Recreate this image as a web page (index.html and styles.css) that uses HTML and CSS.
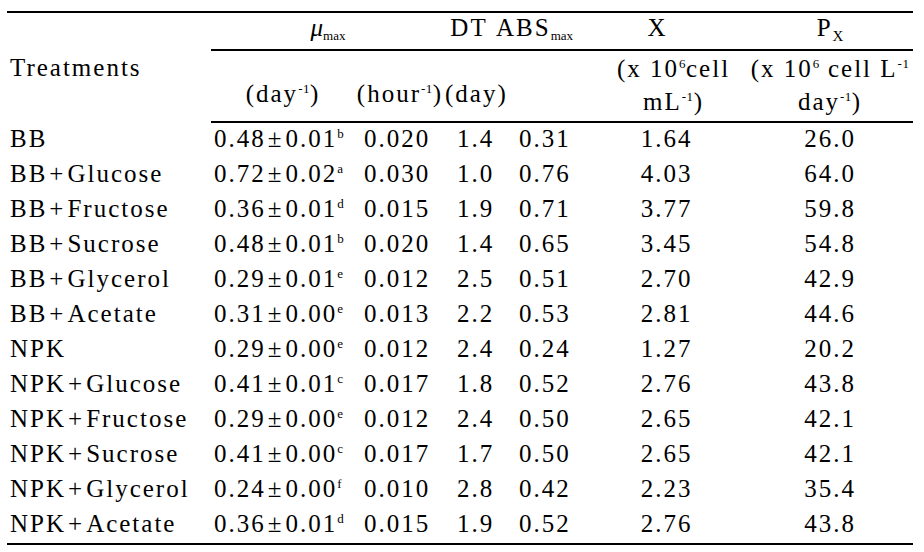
FILE: index.html
```html
<!DOCTYPE html>
<html lang="en">
<head>
<meta charset="utf-8">
<title>Growth parameters</title>
<link rel="stylesheet" href="styles.css">
</head>
<body>
<table class="tbl">
  <colgroup>
    <col class="c1"><col class="c2"><col class="c3"><col class="c4"><col class="c5"><col class="c6"><col class="c7">
  </colgroup>
  <thead>
    <tr class="h1">
      <th class="treat" rowspan="2">Treatments</th>
      <th class="mu" colspan="2"><i>μ</i><sub>max</sub></th>
      <th class="dt">DT</th>
      <th class="abs">ABS<sub>max</sub></th>
      <th class="x">X</th>
      <th class="px">P<sub class="subx">X</sub></th>
    </tr>
    <tr class="h2">
      <th class="u-day">(day<sup>-1</sup>)</th>
      <th class="u-hour">(hour<sup>-1</sup>)</th>
      <th class="u-dt">(day)</th>
      <th class="u-abs"></th>
      <th class="u-x">(x 10<sup>6</sup>cell<br>mL<sup>-1</sup>)</th>
      <th class="u-px">(x 10<sup>6</sup> cell L<sup>-1</sup><br>day<sup>-1</sup>)</th>
    </tr>
  </thead>
  <tbody>
    <tr><td>BB</td><td>0.48<span class="pm">±</span>0.01<sup>b</sup></td><td>0.020</td><td>1.4</td><td>0.31</td><td>1.64</td><td>26.0</td></tr>
    <tr><td>BB<span class="plus">+</span>Glucose</td><td>0.72<span class="pm">±</span>0.02<sup>a</sup></td><td>0.030</td><td>1.0</td><td>0.76</td><td>4.03</td><td>64.0</td></tr>
    <tr><td>BB<span class="plus">+</span>Fructose</td><td>0.36<span class="pm">±</span>0.01<sup>d</sup></td><td>0.015</td><td>1.9</td><td>0.71</td><td>3.77</td><td>59.8</td></tr>
    <tr><td>BB<span class="plus">+</span>Sucrose</td><td>0.48<span class="pm">±</span>0.01<sup>b</sup></td><td>0.020</td><td>1.4</td><td>0.65</td><td>3.45</td><td>54.8</td></tr>
    <tr><td>BB<span class="plus">+</span>Glycerol</td><td>0.29<span class="pm">±</span>0.01<sup>e</sup></td><td>0.012</td><td>2.5</td><td>0.51</td><td>2.70</td><td>42.9</td></tr>
    <tr><td>BB<span class="plus">+</span>Acetate</td><td>0.31<span class="pm">±</span>0.00<sup>e</sup></td><td>0.013</td><td>2.2</td><td>0.53</td><td>2.81</td><td>44.6</td></tr>
    <tr><td>NPK</td><td>0.29<span class="pm">±</span>0.00<sup>e</sup></td><td>0.012</td><td>2.4</td><td>0.24</td><td>1.27</td><td>20.2</td></tr>
    <tr><td>NPK<span class="plus">+</span>Glucose</td><td>0.41<span class="pm">±</span>0.01<sup>c</sup></td><td>0.017</td><td>1.8</td><td>0.52</td><td>2.76</td><td>43.8</td></tr>
    <tr><td>NPK<span class="plus">+</span>Fructose</td><td>0.29<span class="pm">±</span>0.00<sup>e</sup></td><td>0.012</td><td>2.4</td><td>0.50</td><td>2.65</td><td>42.1</td></tr>
    <tr><td>NPK<span class="plus">+</span>Sucrose</td><td>0.41<span class="pm">±</span>0.00<sup>c</sup></td><td>0.017</td><td>1.7</td><td>0.50</td><td>2.65</td><td>42.1</td></tr>
    <tr><td>NPK<span class="plus">+</span>Glycerol</td><td>0.24<span class="pm">±</span>0.00<sup>f</sup></td><td>0.010</td><td>2.8</td><td>0.42</td><td>2.23</td><td>35.4</td></tr>
    <tr class="last"><td>NPK<span class="plus">+</span>Acetate</td><td>0.36<span class="pm">±</span>0.01<sup>d</sup></td><td>0.015</td><td>1.9</td><td>0.52</td><td>2.76</td><td>43.8</td></tr>
  </tbody>
</table>
</body>
</html>
```

FILE: styles.css
```css
body {
  margin: 0;
  background: #ffffff;
  color: #000000;
  font-family: "Liberation Serif", "Times New Roman", serif;
}

.tbl {
  margin: 11px 0 0 7px;
  width: 906px;
  table-layout: fixed;
  border-collapse: separate;
  border-spacing: 0;
  font-size: 25px;
  letter-spacing: 2px;
}

.c1 { width: 204px; }
.c2 { width: 144px; }
.c3 { width: 90px; }
.c4 { width: 48px; }
.c5 { width: 107px; }
.c6 { width: 147px; }
.c7 { width: 166px; }

.tbl th,
.tbl td {
  padding: 0;
  font-weight: normal;
  white-space: nowrap;
  overflow: visible;
  text-align: left;
  vertical-align: top;
}

.tbl sup {
  font-size: 13px;
  line-height: 0;
  vertical-align: 9px;
  letter-spacing: 0.5px;
}

.tbl sub {
  font-size: 13px;
  line-height: 0;
  vertical-align: -4px;
  letter-spacing: 0;
}

.tbl sub.subx {
  font-size: 15px;
  vertical-align: -5px;
}

/* header row 1 */
.tbl .h1 th {
  border-top: 2px solid #000;
  border-bottom: 2px solid #000;
  line-height: 28px;
  padding: 1px 0 7px;
}

.tbl .h1 th.treat {
  border-bottom: none;
  padding: 41px 0 0 3px;
}

.tbl .h1 .mu { text-align: center; }
.tbl .h1 .mu i { font-style: italic; letter-spacing: 0; }
.tbl .h1 .dt { text-align: center; }
.tbl .h1 .abs { padding-left: 3px; }
.tbl .h1 .x { text-align: center; padding-right: 32px; }
.tbl .h1 .px { text-align: center; }

/* header row 2 */
.tbl .h2 th {
  border-bottom: 2px solid #000;
  line-height: 33px;
  padding: 26px 0 0;
}

.tbl .h2 .u-day { text-align: center; }
.tbl .h2 .u-hour { text-align: center; }
.tbl .h2 .u-dt { text-align: left; }

.tbl .h2 .u-x,
.tbl .h2 .u-px {
  text-align: center;
  padding: 1px 0 3px;
}

/* body */
.tbl tbody td {
  line-height: 32px;
  padding: 0 0 3px;
}

.tbl tbody td:nth-child(1) { padding-left: 3px; }
.tbl tbody td:nth-child(2) { padding-left: 3px; }
.tbl tbody td:nth-child(3) { padding-left: 9px; }
.tbl tbody td:nth-child(4) { padding-left: 12px; }
.tbl tbody td:nth-child(5) { padding-left: 26px; }
.tbl tbody td:nth-child(6) { text-align: center; padding-right: 14px; }
.tbl tbody td:nth-child(7) { text-align: center; }

.tbl tbody tr.last td {
  border-bottom: 2px solid #000;
}

.pm {
  margin: 0 2px 0 2px;
}

.plus {
  margin: 0 2px 0 2px;
}
```
